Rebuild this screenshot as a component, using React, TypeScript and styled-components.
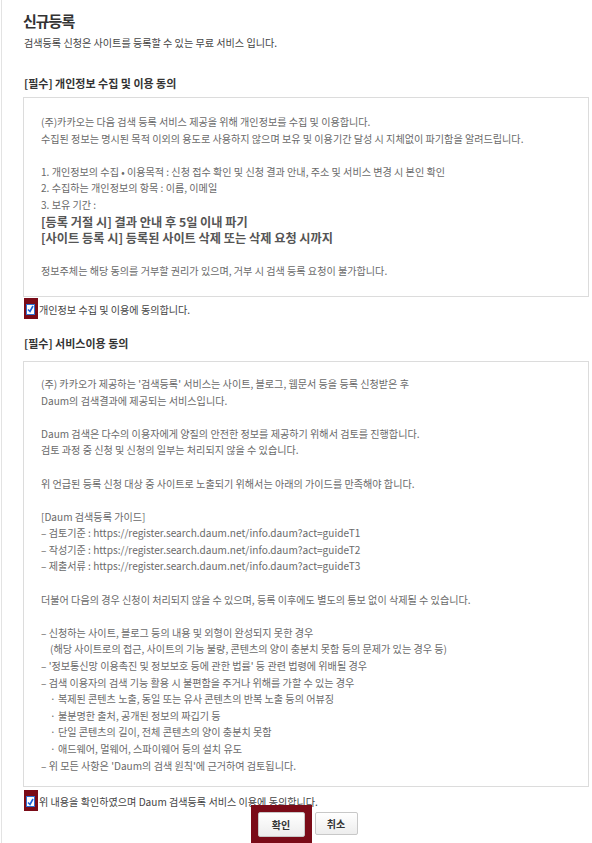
import React from "react";
import styled, { createGlobalStyle } from "styled-components";

const Global = createGlobalStyle`
  html, body { margin: 0; padding: 0; background: #fff; }
  body { font-family: "Noto Sans CJK KR", "Noto Sans", sans-serif; }
`;

const Page = styled.div`
  box-sizing: border-box;
  margin-left: 1px;
  border-left: 1px solid #e3e3e3;
  min-height: 843px;
  padding: 11px 3px 0 21px;
  width: 591px;
  overflow: hidden;
`;

const Title = styled.h1`
  margin: 0;
  font-size: 15px;
  line-height: 20px;
  font-weight: 700;
  letter-spacing: -1px;
  color: #333;
`;

const Subtitle = styled.p`
  margin: 5px 0 0 1px;
  font-size: 10.1px;
  line-height: 14px;
  color: #444;
`;

const SectionHeading = styled.h2<{ $top: number; $bottom: number }>`
  margin: ${(p) => p.$top}px 0 ${(p) => p.$bottom}px 1px;
  font-size: 11px;
  line-height: 14px;
  font-weight: 700;
  color: #333;
`;

const TermsBox = styled.div<{ $pt: number; $pb: number }>`
  border: 1px solid #dcdcdc;
  padding: ${(p) => p.$pt}px 17px ${(p) => p.$pb}px 17px;
  background: #fff;
`;

const Line = styled.div<{ $bold?: boolean; $indent?: boolean }>`
  height: 16.6px;
  line-height: 16.6px;
  white-space: nowrap;
  padding-left: ${(p) => (p.$indent ? 9 : 0)}px;
  font-size: ${(p) => (p.$bold ? 12.2 : 10.1)}px;
  font-weight: ${(p) => (p.$bold ? 700 : 400)};
  color: ${(p) => (p.$bold ? "#555" : "#6a6a6a")};
`;

const AgreeRow = styled.label<{ $top: number }>`
  display: flex;
  align-items: center;
  gap: 4px;
  margin-top: ${(p) => p.$top}px;
  height: 11px;
  font-size: 10.1px;
  color: #444;
  white-space: nowrap;
`;

const Highlight = styled.span`
  display: inline-flex;
  background: #7a0b18;
  padding: 6px 3px 4px 2px;
  margin: -6px -3px -4px 1px;
`;

const Check = styled.span`
  display: inline-flex;
  align-items: center;
  justify-content: center;
  box-sizing: border-box;
  width: 9px;
  height: 11px;
  background: #fff;
  border: 1px solid #2f6fd0;
`;

const ButtonRow = styled.div`
  display: flex;
  justify-content: center;
  align-items: flex-start;
  gap: 3px;
  margin-top: 5px;
  padding-left: 3px;
`;

const Frame = styled.span`
  display: inline-flex;
  background: #7a0b18;
  padding: 7px;
  margin: -7px 0 -7px -7px;
`;

const Button = styled.button<{ $w: number; $h: number }>`
  box-sizing: border-box;
  width: ${(p) => p.$w}px;
  height: ${(p) => p.$h}px;
  border: 1px solid #c8c8c8;
  border-radius: 2px;
  background: linear-gradient(#ffffff, #ededed);
  font-family: "Noto Sans CJK KR", sans-serif;
  font-size: 10px;
  font-weight: 700;
  color: #333;
  padding: 0;
  cursor: pointer;
`;

const CheckMark = () => (
  <Check>
    <svg width="7" height="8" viewBox="0 0 7 8">
      <path d="M1 4.5 L3 6.5 L6 1" fill="none" stroke="#1d63d8" strokeWidth="1.6" />
    </svg>
  </Check>
);

type L = { t: string; bold?: boolean; indent?: boolean };

const privacy: L[] = [
  { t: "(주)카카오는 다음 검색 등록 서비스 제공을 위해 개인정보를 수집 및 이용합니다." },
  { t: "수집된 정보는 명시된 목적 이외의 용도로 사용하지 않으며 보유 및 이용기간 달성 시 지체없이 파기함을 알려드립니다." },
  { t: "" },
  { t: "1. 개인정보의 수집 • 이용목적 : 신청 접수 확인 및 신청 결과 안내, 주소 및 서비스 변경 시 본인 확인" },
  { t: "2. 수집하는 개인정보의 항목 : 이름, 이메일" },
  { t: "3. 보유 기간 :" },
  { t: "[등록 거절 시] 결과 안내 후 5일 이내 파기", bold: true },
  { t: "[사이트 등록 시] 등록된 사이트 삭제 또는 삭제 요청 시까지", bold: true },
  { t: "" },
  { t: "정보주체는 해당 동의를 거부할 권리가 있으며, 거부 시 검색 등록 요청이 불가합니다." },
];

const service: L[] = [
  { t: "(주) 카카오가 제공하는 '검색등록' 서비스는 사이트, 블로그, 웹문서 등을 등록 신청받은 후" },
  { t: "Daum의 검색결과에 제공되는 서비스입니다." },
  { t: "" },
  { t: "Daum 검색은 다수의 이용자에게 양질의 안전한 정보를 제공하기 위해서 검토를 진행합니다." },
  { t: "검토 과정 중 신청 및 신청의 일부는 처리되지 않을 수 있습니다." },
  { t: "" },
  { t: "위 언급된 등록 신청 대상 중 사이트로 노출되기 위해서는 아래의 가이드를 만족해야 합니다." },
  { t: "" },
  { t: "[Daum 검색등록 가이드]" },
  { t: "– 검토기준 : https://register.search.daum.net/info.daum?act=guideT1" },
  { t: "– 작성기준 : https://register.search.daum.net/info.daum?act=guideT2" },
  { t: "– 제출서류 : https://register.search.daum.net/info.daum?act=guideT3" },
  { t: "" },
  { t: "더불어 다음의 경우 신청이 처리되지 않을 수 있으며, 등록 이후에도 별도의 통보 없이 삭제될 수 있습니다." },
  { t: "" },
  { t: "– 신청하는 사이트, 블로그 등의 내용 및 외형이 완성되지 못한 경우" },
  { t: "(해당 사이트로의 접근, 사이트의 기능 불량, 콘텐츠의 양이 충분치 못함 등의 문제가 있는 경우 등)", indent: true },
  { t: "– '정보통신망 이용촉진 및 정보보호 등에 관한 법률' 등 관련 법령에 위배될 경우" },
  { t: "– 검색 이용자의 검색 기능 활용 시 불편함을 주거나 위해를 가할 수 있는 경우" },
  { t: "· 복제된 콘텐츠 노출, 동일 또는 유사 콘텐츠의 반복 노출 등의 어뷰징", indent: true },
  { t: "· 불분명한 출처, 공개된 정보의 짜깁기 등", indent: true },
  { t: "· 단일 콘텐츠의 길이, 전체 콘텐츠의 양이 충분치 못함", indent: true },
  { t: "· 애드웨어, 멀웨어, 스파이웨어 등의 설치 유도", indent: true },
  { t: "– 위 모든 사항은 'Daum의 검색 원칙'에 근거하여 검토됩니다." },
];

const renderLines = (lines: L[]) =>
  lines.map((l, i) => (
    <Line key={i} $bold={l.bold} $indent={l.indent}>
      {l.t || "\u00a0"}
    </Line>
  ));

export default function App() {
  return (
    <>
      <Global />
      <Page>
        <Title>신규등록</Title>
        <Subtitle>검색등록 신청은 사이트를 등록할 수 있는 무료 서비스 입니다.</Subtitle>

        <SectionHeading $top={26} $bottom={7}>[필수] 개인정보 수집 및 이용 동의</SectionHeading>
        <TermsBox $pt={16} $pb={16}>{renderLines(privacy)}</TermsBox>
        <AgreeRow $top={7}>
          <Highlight>
            <CheckMark />
          </Highlight>
          <span>개인정보 수집 및 이용에 동의합니다.</span>
        </AgreeRow>

        <SectionHeading $top={21} $bottom={11}>[필수] 서비스이용 동의</SectionHeading>
        <TermsBox $pt={14} $pb={12}>{renderLines(service)}</TermsBox>
        <AgreeRow $top={9}>
          <Highlight>
            <CheckMark />
          </Highlight>
          <span>위 내용을 확인하였으며 Daum 검색등록 서비스 이용에 동의합니다.</span>
        </AgreeRow>

        <ButtonRow>
          <Frame>
            <Button $w={47} $h={25}>확인</Button>
          </Frame>
          <Button $w={43} $h={23}>취소</Button>
        </ButtonRow>
      </Page>
    </>
  );
}
